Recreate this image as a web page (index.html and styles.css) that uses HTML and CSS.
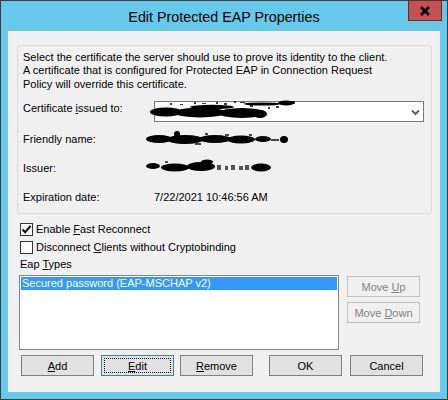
FILE: index.html
```html
<!DOCTYPE html>
<html>
<head>
<meta charset="utf-8">
<link rel="stylesheet" href="styles.css">
</head>
<body>
<div class="window">
  <div class="titlebar">
    <span class="title">Edit Protected EAP Properties</span>
    <div class="close">
      <svg width="10" height="10" viewBox="0 0 10 10"><path d="M1 1 L9 9 M9 1 L1 9" stroke="#000" stroke-width="2.8" fill="none"/></svg>
    </div>
  </div>
  <div class="client">
    <div class="group">
      <p class="intro">Select the certificate the server should use to prove its identity to the client.<br>A certificate that is configured for Protected EAP in Connection Request<br>Policy will override this certificate.</p>
      <div class="row row-cert">
        <span class="label">Certificate <u>i</u>ssued to:</span>
        <div class="combo">
          <svg class="redact redact-cert" width="146" height="20" viewBox="0 0 146 20">
            <g fill="#000">
              <ellipse cx="16" cy="12" rx="16" ry="4.5"/>
              <ellipse cx="50" cy="12.5" rx="26" ry="5"/>
              <ellipse cx="92" cy="13" rx="24" ry="5"/>
              <ellipse cx="110" cy="14" rx="7" ry="4"/>
              <ellipse cx="62" cy="7" rx="22" ry="2.2"/>
              <ellipse cx="112" cy="4" rx="18" ry="1.6"/>
              <ellipse cx="136" cy="3" rx="8" ry="2.5"/>
            </g>
            <g fill="#000" opacity="0.75">
              <rect x="20" y="3" width="2" height="2"/><rect x="30" y="4" width="3" height="1"/><rect x="44" y="2" width="2" height="2"/>
              <rect x="52" y="3" width="4" height="1"/><rect x="66" y="2" width="2" height="2"/><rect x="74" y="3" width="3" height="2"/>
              <rect x="84" y="1" width="2" height="2"/><rect x="90" y="2" width="5" height="1"/><rect x="100" y="5" width="3" height="2"/>
              <rect x="126" y="6" width="3" height="2"/><rect x="118" y="7" width="2" height="2"/><rect x="142" y="1" width="3" height="3"/>
            </g>
          </svg>
          <svg class="chev" width="9" height="7" viewBox="0 0 9 7"><path d="M1 1.5 L4.5 5 L8 1.5" stroke="#5f5f5f" stroke-width="2" fill="none"/></svg>
        </div>
      </div>
      <div class="row">
        <span class="label">Friendly name:</span>
        <svg class="redact redact-friendly" width="144" height="15" viewBox="0 0 144 15">
          <g fill="#000">
            <ellipse cx="14" cy="8" rx="13" ry="4"/>
            <ellipse cx="40" cy="8.5" rx="18" ry="4.5"/>
            <ellipse cx="70" cy="8" rx="16" ry="4"/>
            <ellipse cx="96" cy="8.5" rx="14" ry="4"/>
            <ellipse cx="32" cy="3" rx="3" ry="3"/>
            <ellipse cx="118" cy="8" rx="8" ry="3"/>
            <ellipse cx="139" cy="8.5" rx="4" ry="3.5"/>
          </g>
          <g fill="#000" opacity="0.7">
            <rect x="126" y="8" width="8" height="2"/><rect x="60" y="2" width="3" height="2"/><rect x="80" y="3" width="4" height="2"/>
            <rect x="104" y="3" width="3" height="2"/><rect x="50" y="12" width="6" height="2"/>
          </g>
        </svg>
      </div>
      <div class="row">
        <span class="label">Issuer:</span>
        <svg class="redact redact-issuer" width="128" height="15" viewBox="0 0 128 15">
          <g fill="#000">
            <ellipse cx="8" cy="7" rx="7" ry="3"/>
            <ellipse cx="30" cy="8.5" rx="14" ry="4"/>
            <ellipse cx="56" cy="7.5" rx="14" ry="4.5"/>
            <ellipse cx="62" cy="3" rx="6" ry="2.5"/>
            <ellipse cx="116" cy="8.5" rx="10" ry="4"/>
          </g>
          <g fill="#000" opacity="0.65">
            <rect x="72" y="6" width="4" height="5"/><rect x="80" y="7" width="3" height="4"/><rect x="86" y="6" width="4" height="5"/>
            <rect x="94" y="7" width="4" height="4"/><rect x="100" y="6" width="4" height="5"/><rect x="20" y="2" width="3" height="2"/>
          </g>
        </svg>
      </div>
      <div class="row">
        <span class="label">Expiration date:</span>
        <span class="value">7/22/2021 10:46:56 AM</span>
      </div>
    </div>

    <div class="check">
      <span class="box checked">
        <svg width="11" height="11" viewBox="0 0 11 11"><path d="M1.5 5.5 L4.2 8.3 L9.5 1.8" stroke="#000" stroke-width="2" fill="none"/></svg>
      </span>
      <span>Enable <u>F</u>ast Reconnect</span>
    </div>
    <div class="check">
      <span class="box"></span>
      <span>Disconnect <u>C</u>lients without Cryptobinding</span>
    </div>
    <div class="caption">Eap <u>T</u>ypes</div>

    <div class="middle">
      <div class="list">
        <div class="item selected">Secured password (EAP-MSCHAP v2)</div>
      </div>
      <div class="side">
        <div class="btn disabled"><span>Move <u>U</u>p</span></div>
        <div class="btn disabled"><span>Move <u>D</u>own</span></div>
      </div>
    </div>

    <div class="buttons">
      <div class="btn b-add"><span><u>A</u>dd</span></div>
      <div class="btn b-edit focused"><span class="focus"><span><u>E</u>dit</span></span></div>
      <div class="btn b-remove"><span><u>R</u>emove</span></div>
      <div class="btn b-ok"><span>OK</span></div>
      <div class="btn b-cancel"><span>Cancel</span></div>
    </div>
  </div>
</div>
</body>
</html>
```

FILE: styles.css
```css
* { box-sizing: border-box; }
html, body { margin: 0; padding: 0; }
body {
  font-family: "Liberation Sans", Arial, sans-serif;
  font-size: 11px;
  color: #000;
  background: #fff;
}
u { text-decoration: underline; text-underline-offset: 1px; }

.window {
  width: 448px;
  height: 400px;
  border: 1px solid #3c3c3c;
  background: #66c9ea;
  padding: 0 7px 7px 7px;
  display: flex;
  flex-direction: column;
  position: relative;
}
.titlebar {
  height: 30px;
  flex: none;
  display: flex;
  align-items: center;
  justify-content: center;
}
.title {
  font-size: 14.3px;
  color: #000;
  padding-top: 1px;
}
.close {
  position: absolute;
  top: -1px;
  right: 5px;
  width: 34px;
  height: 21px;
  background: #c75050;
  border: 1px solid #5a2e2e;
  display: flex;
  align-items: center;
  justify-content: center;
}

.client {
  flex: 1;
  background: #f0f0f0;
  padding: 14px 8px 0 9px;
  display: flex;
  flex-direction: column;
}

.group {
  border: 1px solid #dcdcdc;
  border-radius: 3px;
  height: 169px;
  padding: 5px 7px 0 5px;
  flex: none;
}
.intro {
  margin: 0;
  line-height: 13.3px;
}
.row {
  display: flex;
  align-items: flex-start;
  line-height: 14px;
  margin-top: 15px;
}
.row-cert { margin-top: 10px; }
.row-cert + .row { margin-top: 10px; }
.label {
  width: 131px;
  flex: none;
}
.combo {
  position: relative;
  width: 270px;
  height: 21px;
  border: 1px solid #7a7a7a;
  background: #fff;
}
.redact-cert {
  position: absolute;
  left: -5px;
  top: -2px;
}
.chev {
  position: absolute;
  right: 3px;
  top: 7px;
}
.redact-friendly { margin-left: -9px; margin-top: -1px; }
.redact-issuer { margin-left: -9px; margin-top: -2px; }

.check {
  display: flex;
  align-items: center;
  height: 18px;
  margin-left: 3px;
  gap: 3px;
}
.group + .check { margin-top: 6px; }
.box {
  width: 13px;
  height: 13px;
  border: 1px solid #333;
  background: #fff;
  display: flex;
  align-items: center;
  justify-content: center;
  flex: none;
}
.caption {
  line-height: 14px;
  margin-top: 1px;
  margin-left: 3px;
}

.middle {
  display: flex;
  margin-top: 4px;
}
.list {
  width: 320px;
  height: 75px;
  margin-left: 2px;
  border: 1px solid #828790;
  background: #fff;
  padding: 1px;
}
.item {
  line-height: 13px;
  height: 13px;
  padding-left: 1px;
}
.item.selected {
  background: #3399ff;
  color: #fff;
}
.side {
  margin-left: 8px;
  margin-top: 1px;
  display: flex;
  flex-direction: column;
  gap: 5px;
}

.btn {
  width: 73px;
  height: 21px;
  border: 1px solid #7f7f7f;
  background: #e1e1e1;
  display: flex;
  align-items: center;
  justify-content: center;
  flex: none;
  white-space: pre;
}
.btn.disabled {
  border-color: #bfbfbf;
  background: #f0f0f0;
  color: #838383;
}
.btn.focused {
  border-color: #3c7fb1;
  padding: 2px;
}
.focus {
  width: 100%;
  height: 100%;
  border: 1px dotted #000;
  display: flex;
  align-items: center;
  justify-content: center;
}

.buttons {
  display: flex;
  margin-top: 5px;
}
.b-add { margin-left: 4px; }
.b-edit { margin-left: 7px; }
.b-remove { margin-left: 6px; }
.b-ok { margin-left: 16px; }
.b-cancel { margin-left: 8px; }
```
